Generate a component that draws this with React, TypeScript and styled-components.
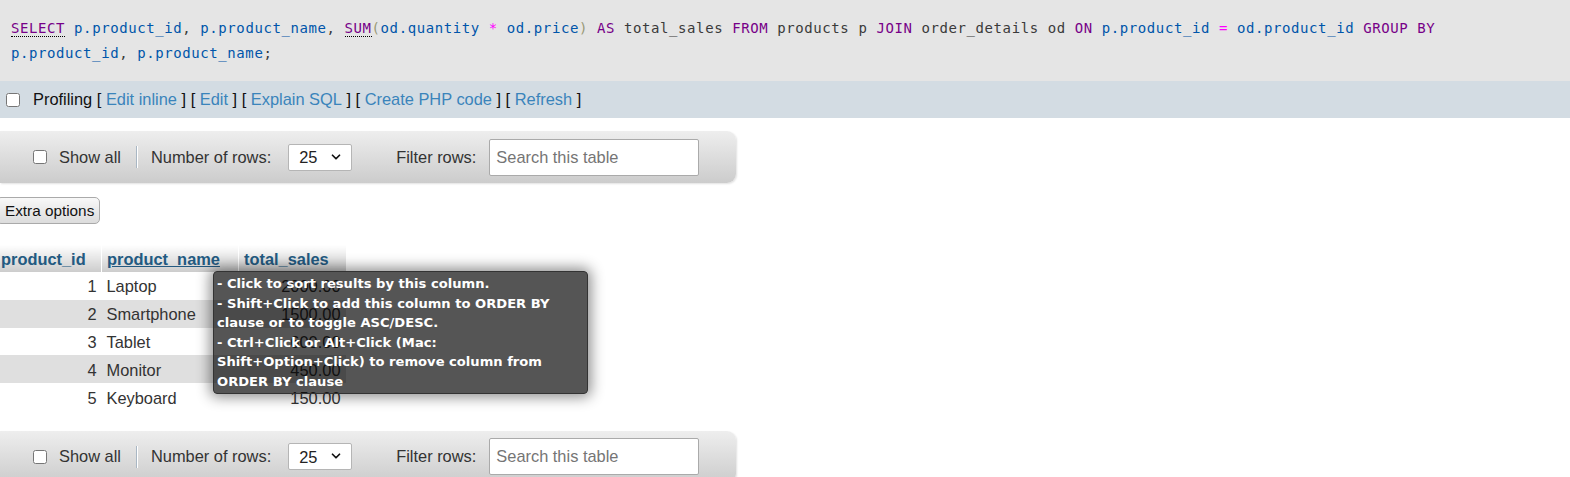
import React from "react";
import styled, { createGlobalStyle } from "styled-components";
import { ChevronDown } from "lucide-react";

const Global = createGlobalStyle`
  html, body { margin: 0; padding: 0; overflow: hidden; background: #fff; }
  body { font-family: "Liberation Sans", Arial, sans-serif; font-size: 16.4px; color: #333; }
  * { box-sizing: border-box; }
`;

const Page = styled.div`
  display: flex;
  flex-direction: column;
  align-items: flex-start;
  width: 1570px;
`;

/* ---------- SQL box ---------- */
const SqlBox = styled.div`
  align-self: stretch;
  background: #e5e5e5;
  padding: 16px 10px 15px 11px;
`;

const Code = styled.div`
  width: 1480px;
  font-family: "DejaVu Sans Mono", "Liberation Mono", monospace;
  font-size: 14px;
  letter-spacing: 0.585px;
  line-height: 25px;
  color: #3a3a3a;
  white-space: normal;
`;

const Tok = styled.span<{ $kind: "kw" | "var" | "op" | "br" }>`
  color: ${(p) =>
    p.$kind === "kw" ? "#770088" : p.$kind === "var" ? "#0055aa" : p.$kind === "op" ? "#ff00ff" : "#999977"};
`;

const Doc = styled.span`
  color: #770088;
  border-bottom: 1px dotted #000;
`;

/* ---------- profiling bar ---------- */
const ProfBar = styled.div`
  align-self: stretch;
  height: 37px;
  background: #d3dce3;
  display: flex;
  align-items: center;
  padding-left: 6px;
  color: #111;
  white-space: pre;
  font-size: 16.4px;
`;

const Check = styled.input.attrs({ type: "checkbox" })<{ $ml?: number; $mr?: number }>`
  width: 14px;
  height: 14px;
  margin: 0 ${(p) => p.$mr ?? 0}px 0 ${(p) => p.$ml ?? 0}px;
  flex: none;
`;

const Link = styled.a`
  color: #3a84bb;
  text-decoration: none;
`;

/* ---------- navigation bar ---------- */
const NavBar = styled.div<{ $mt: number }>`
  margin-top: ${(p) => p.$mt}px;
  width: 736px;
  height: 52px;
  flex: none;
  display: flex;
  align-items: center;
  background: linear-gradient(#eeeeee, #cccccc);
  border-radius: 0 9px 9px 0;
  box-shadow: 1px 1px 2px rgba(0, 0, 0, 0.12);
  color: #333;
`;

const NavText = styled.span<{ $ml: number }>`
  margin-left: ${(p) => p.$ml}px;
  white-space: nowrap;
`;

const Separator = styled.div`
  margin-left: 15px;
  width: 1px;
  height: 22px;
  background: #a9b7c4;
  box-shadow: 1px 0 0 #fff;
`;

const SelectWrap = styled.div`
  position: relative;
  margin-left: 17px;
  width: 64px;
  height: 27px;
`;

const Select = styled.select`
  appearance: none;
  width: 100%;
  height: 100%;
  border: 1px solid #b5b5b5;
  border-radius: 2px;
  background: #fff;
  padding: 0 0 0 10px;
  font-family: "Liberation Sans", Arial, sans-serif;
  font-size: 16.4px;
  color: #222;
`;

const Chevron = styled.span`
  position: absolute;
  right: 9px;
  top: 6px;
  display: flex;
  pointer-events: none;
  color: #111;
`;

const Search = styled.input`
  margin-left: 13px;
  width: 210px;
  height: 37px;
  border: 1px solid #aaa;
  border-radius: 2px;
  background: #fff;
  padding: 0 6px;
  font-family: "Liberation Sans", Arial, sans-serif;
  font-size: 16.4px;
  color: #333;
  &::placeholder { color: #757575; }
`;

/* ---------- extra options ---------- */
const Button = styled.button`
  margin: 14px 0 0 -4px;
  height: 27px;
  padding: 0 5px 0 8px;
  border: 1px solid #aaa;
  border-radius: 5px;
  background: linear-gradient(#f8f8f8, #dcdcdc);
  font-family: "Liberation Sans", Arial, sans-serif;
  font-size: 15.3px;
  color: #111;
`;

/* ---------- table ---------- */
const TableWrap = styled.div`
  position: relative;
  margin-top: 21px;
  align-self: stretch;
`;

const Table = styled.table`
  margin-left: -5px;
  border-collapse: collapse;
  table-layout: fixed;
  width: 350px;
`;

const Th = styled.th<{ $w: number; $hover?: boolean }>`
  width: ${(p) => p.$w}px;
  height: 27px;
  padding: 1px 0 0 5px;
  text-align: left;
  font-size: 16.4px;
  font-weight: bold;
  color: #235a81;
  background: linear-gradient(#ffffff, #cccccc);
  border-left: 1px solid #fff;
  text-decoration: ${(p) => (p.$hover ? "underline" : "none")};
  white-space: nowrap;
`;

const Tr = styled.tr<{ $even: boolean }>`
  background: ${(p) => (p.$even ? "#dfdfdf" : "#ffffff")};
`;

const Td = styled.td<{ $align: "left" | "right" }>`
  height: 27.8px;
  padding: 2px 5px 0;
  text-align: ${(p) => p.$align};
  color: #333;
  white-space: nowrap;
`;

const Tooltip = styled.div`
  position: absolute;
  left: 213px;
  top: 26px;
  width: 375px;
  height: 123px;
  padding: 2px 3px 2px 3px;
  background: rgba(0, 0, 0, 0.665);
  border: 1px solid #333;
  border-radius: 4px;
  box-shadow: 0 0 14px 3px rgba(0, 0, 0, 0.45);
  color: #fff;
  font-family: "DejaVu Sans", Verdana, sans-serif;
  font-weight: bold;
  font-size: 13.1px;
  line-height: 19.6px;
`;

const rows = [
  { id: 1, name: "Laptop", total: "2000.00" },
  { id: 2, name: "Smartphone", total: "1500.00" },
  { id: 3, name: "Tablet", total: "600.00" },
  { id: 4, name: "Monitor", total: "450.00" },
  { id: 5, name: "Keyboard", total: "150.00" },
];

function Navigation({ mt }: { mt: number }) {
  return (
    <NavBar $mt={mt}>
      <Check $ml={33} />
      <NavText $ml={12}>Show all</NavText>
      <Separator />
      <NavText $ml={14}>Number of rows:</NavText>
      <SelectWrap>
        <Select defaultValue="25">
          <option>25</option>
          <option>50</option>
          <option>100</option>
        </Select>
        <Chevron>
          <ChevronDown size={14} strokeWidth={3} />
        </Chevron>
      </SelectWrap>
      <NavText $ml={44}>Filter rows:</NavText>
      <Search placeholder="Search this table" />
    </NavBar>
  );
}

export default function App() {
  return (
    <>
      <Global />
      <Page>
        <SqlBox>
          <Code>
            <Doc>SELECT</Doc> <Tok $kind="var">p.product_id</Tok>, <Tok $kind="var">p.product_name</Tok>,{" "}
            <Doc>SUM</Doc>
            <Tok $kind="br">(</Tok>
            <Tok $kind="var">od.quantity</Tok> <Tok $kind="op">*</Tok> <Tok $kind="var">od.price</Tok>
            <Tok $kind="br">)</Tok> <Tok $kind="kw">AS</Tok> total_sales <Tok $kind="kw">FROM</Tok> products p{" "}
            <Tok $kind="kw">JOIN</Tok> order_details od <Tok $kind="kw">ON</Tok> <Tok $kind="var">p.product_id</Tok>{" "}
            <Tok $kind="op">=</Tok> <Tok $kind="var">od.product_id</Tok> <Tok $kind="kw">GROUP BY</Tok>{" "}
            <Tok $kind="var">p.product_id</Tok>, <Tok $kind="var">p.product_name</Tok>;
          </Code>
        </SqlBox>

        <ProfBar>
          <Check $ml={0} $mr={13} />
          {"Profiling [ "}
          <Link>Edit inline</Link>
          {" ] [ "}
          <Link>Edit</Link>
          {" ] [ "}
          <Link>Explain SQL</Link>
          {" ] [ "}
          <Link>Create PHP code</Link>
          {" ] [ "}
          <Link>Refresh</Link>
          {" ]"}
        </ProfBar>

        <Navigation mt={13} />

        <Button>Extra options</Button>

        <TableWrap>
          <Table>
            <thead>
              <tr>
                <Th $w={106}>product_id</Th>
                <Th $w={137} $hover>
                  product_name
                </Th>
                <Th $w={107}>total_sales</Th>
              </tr>
            </thead>
            <tbody>
              {rows.map((r, i) => (
                <Tr key={r.id} $even={i % 2 === 1}>
                  <Td $align="right">{r.id}</Td>
                  <Td $align="left">{r.name}</Td>
                  <Td $align="right">{r.total}</Td>
                </Tr>
              ))}
            </tbody>
          </Table>
          <Tooltip>
            <div>- Click to sort results by this column.</div>
            <div>- Shift+Click to add this column to ORDER BY clause or to toggle ASC/DESC.</div>
            <div>- Ctrl+Click or Alt+Click (Mac: Shift+Option+Click) to remove column from ORDER BY clause</div>
          </Tooltip>
        </TableWrap>

        <Navigation mt={20} />
      </Page>
    </>
  );
}
